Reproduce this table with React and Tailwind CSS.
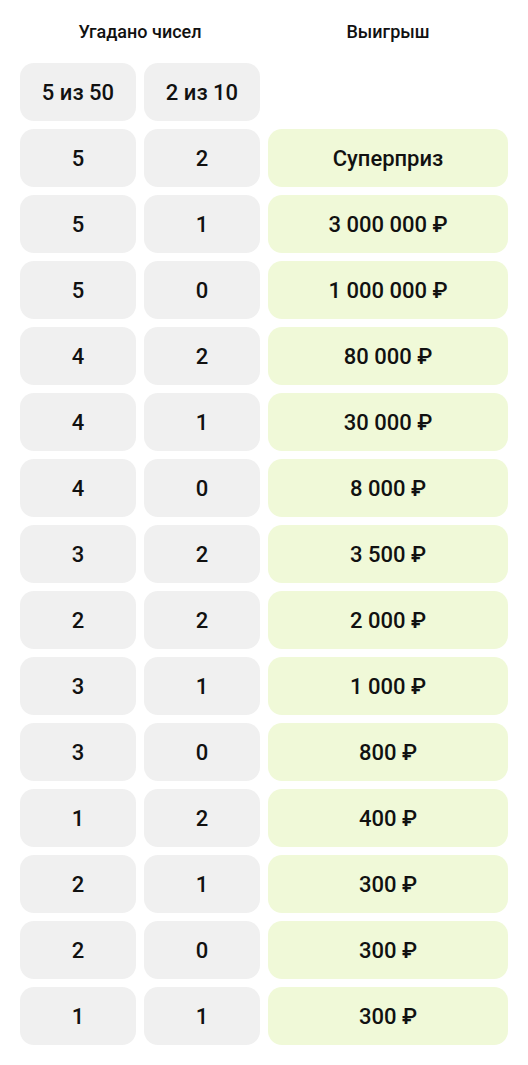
import React from 'react';

const rows = [
  ['5', '2', 'Суперприз'],
  ['5', '1', '3 000 000 ₽'],
  ['5', '0', '1 000 000 ₽'],
  ['4', '2', '80 000 ₽'],
  ['4', '1', '30 000 ₽'],
  ['4', '0', '8 000 ₽'],
  ['3', '2', '3 500 ₽'],
  ['2', '2', '2 000 ₽'],
  ['3', '1', '1 000 ₽'],
  ['3', '0', '800 ₽'],
  ['1', '2', '400 ₽'],
  ['2', '1', '300 ₽'],
  ['2', '0', '300 ₽'],
  ['1', '1', '300 ₽'],
];

const Cell = ({ children, green }) => (
  <div
    className={`flex h-[58px] items-center justify-center rounded-[14px] text-[22px] font-medium text-[#111] ${
      green ? 'bg-[#f0f9d8]' : 'bg-[#f0f0f0]'
    }`}
  >
    {children}
  </div>
);

const App = () => {
  return (
    <div className="min-h-[1065px] bg-white px-5 pt-5 pb-5 font-['Roboto',sans-serif]">
      <div className="grid grid-cols-[116px_116px_1fr] gap-2">
        {/* заголовки */}
        <div className="col-span-2 h-[35px] text-center text-[18px] leading-6 font-medium text-[#111]">
          Угадано чисел
        </div>
        <div className="h-[35px] text-center text-[18px] leading-6 font-medium text-[#111]">
          Выигрыш
        </div>

        <Cell>5 из 50</Cell>
        <Cell>2 из 10</Cell>
        <div></div>

        {rows.map((r, i) => (
          <React.Fragment key={i}>
            <Cell>{r[0]}</Cell>
            <Cell>{r[1]}</Cell>
            <Cell green>{r[2]}</Cell>
          </React.Fragment>
        ))}
      </div>
    </div>
  );
};

export default App;
